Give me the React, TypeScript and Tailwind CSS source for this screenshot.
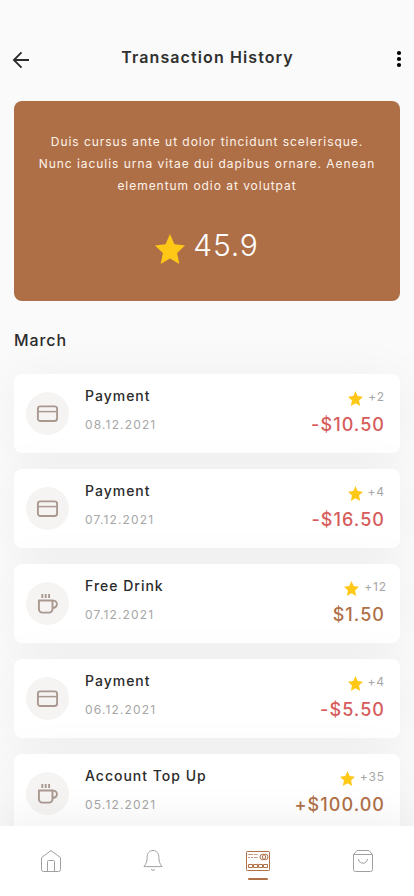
import React from 'react';

type Transaction = {
  id: number;
  title: string;
  date: string;
  points: string;
  amount: string;
  icon: 'card' | 'cup';
  amountClass: string;
  pointsClass: string;
};

const transactions: Transaction[] = [
  { id: 1, title: 'Payment', date: '08.12.2021', points: '+2', amount: '-$10.50', icon: 'card', amountClass: 'text-[#d65c5c]', pointsClass: 'mr-[15px]' },
  { id: 2, title: 'Payment', date: '07.12.2021', points: '+4', amount: '-$16.50', icon: 'card', amountClass: 'text-[#d65c5c]', pointsClass: 'mr-[15px]' },
  { id: 3, title: 'Free Drink', date: '07.12.2021', points: '+12', amount: '$1.50', icon: 'cup', amountClass: 'text-[#b07048]', pointsClass: 'mr-[13px]' },
  { id: 4, title: 'Payment', date: '06.12.2021', points: '+4', amount: '-$5.50', icon: 'card', amountClass: 'text-[#d65c5c]', pointsClass: 'mr-[15px]' },
  { id: 5, title: 'Account Top Up', date: '05.12.2021', points: '+35', amount: '+$100.00', icon: 'cup', amountClass: 'text-[#b07048]', pointsClass: 'mr-[15px]' },
];

const Star = ({ className }: { className: string }) => (
  <svg viewBox="0 0 30 30" className={className} fill="#ffc817">
    <path d="M15 0l4.4 10.2L30 11.5l-7.9 7.4L24.3 30 15 24.4 5.7 30l2.2-11.1L0 11.5l10.6-1.3z" />
  </svg>
);

const CardIcon = () => (
  <svg width="22" height="22" viewBox="0 0 22 22" fill="none" stroke="#a8988f" strokeWidth="1.9">
    <rect x="1.9" y="4.4" width="19.2" height="14.6" rx="2.4" />
    <path d="M1.9 9.6h19.2" strokeWidth="1.5" />
  </svg>
);

const CupIcon = () => (
  <svg width="22" height="22" viewBox="0 0 22 22" fill="none" stroke="#a8988f" strokeWidth="1.9">
    <path d="M2.900 8.500h13.600v8.600a3.500 3.500 0 0 1-3.500 3.500H6.400a3.500 3.500 0 0 1-3.500-3.500z" strokeLinejoin="round" />
    <path d="M16.500 8.600h.8a3.500 3.500 0 0 1 0 7.200h-.8" />
    <path d="M6.300 2v4M9.700 2v4M13.100 2v4" />
  </svg>
);

const TransactionRow = ({ item }: { item: Transaction }) => (
  <li className="flex h-[79px] rounded-lg bg-white pl-3 shadow-[0_4px_50px_rgba(0,0,0,0.05)]">
    <div className="mt-[18px] flex h-[43px] w-[43px] shrink-0 items-center justify-center rounded-full bg-[#f6f4f3] pr-px pb-px">
      {item.icon === 'card' ? <CardIcon /> : <CupIcon />}
    </div>
    <div className="ml-4 flex-1 pt-3">
      <p className="text-[14px] leading-5 font-medium tracking-[1px] text-[#2b2b2b]">{item.title}</p>
      <p className="mt-[9px] text-[12px] leading-5 tracking-[1.15px] text-[#a6a6a6]">{item.date}</p>
    </div>
    <div className="flex flex-col items-end pt-[13px]">
      <div className={`flex h-5 items-start gap-[5px] ${item.pointsClass}`}>
        <Star className="mt-1 h-[15px] w-[15px]" />
        <span className="text-[12px] leading-5 tracking-[0.9px] text-[#a6a6a6]">{item.points}</span>
      </div>
      <p className={`mt-[6px] mr-[15px] text-[18px] leading-6 font-medium tracking-[1.05px] ${item.amountClass}`}>{item.amount}</p>
    </div>
  </li>
);

const Header = () => (
  <header className="flex h-[101px] items-start justify-between pt-[45px] pr-[12px] pl-[12px]">
    <svg width="18" height="30" viewBox="0 0 18 30" fill="none" stroke="#2b2b2b" strokeWidth="1.8">
      <path d="M17 15H2M9.500 7.300L1.900 15l7.600 7.600" />
    </svg>
    <h1 className="mr-[11px] text-[16px] leading-6 font-semibold tracking-[1.1px] text-[#303030]">Transaction History</h1>
    <svg width="6" height="30" viewBox="0 0 6 30" fill="#000">
      <circle cx="3" cy="8" r="2.100" />
      <circle cx="3" cy="14" r="2.100" />
      <circle cx="3" cy="20" r="2.100" />
    </svg>
  </header>
);

const BottomNav = () => (
  <nav className="relative flex h-[70px] shrink-0 bg-white pt-[23px] shadow-[0_-8px_40px_rgba(0,0,0,0.06)]">
    <a className="ml-[40px]" aria-label="Home">
      <svg width="22" height="24" viewBox="0 0 22 24" fill="none" stroke="#a0a0a0">
        <path d="M1.500 8.600L11 1.600l9.500 7v11.900a2 2 0 0 1-2 2h-15a2 2 0 0 1-2-2z" strokeLinejoin="round" />
        <path d="M7.500 22.500v-10a1 1 0 0 1 1-1h5a1 1 0 0 1 1 1v10" />
      </svg>
    </a>
    <a className="ml-[80px]" aria-label="Notifications">
      <svg width="22" height="24" viewBox="0 0 22 24" fill="none" stroke="#a0a0a0" strokeLinecap="round">
        <path d="M2.200 17.300c2.300-3 2.900-5 2.900-8.800 0-4.500 2.400-7 5.900-7s5.900 2.500 5.900 7c0 3.800.6 5.800 2.900 8.800z" strokeLinejoin="round" />
        <path d="M9.300 20.700q1.700 1.800 3.400 0" />
      </svg>
    </a>
    <a className="ml-[82px] flex flex-col items-center" aria-label="Transactions">
      <svg width="24" height="24" viewBox="0 0 24 24" fill="none" stroke="#b07048">
        <rect x="0.500" y="2.500" width="23" height="19" rx="0.800" />
        <path d="M2 5.500h5M8 5.500h3.500M2 8.500h2M5 8.500h2M8 8.500h3.500" strokeWidth="0.700" />
        <circle cx="16.800" cy="8" r="2.800" />
        <circle cx="19.200" cy="8" r="2.800" />
        <path d="M2.500 15.500h4v3h-4zM7.500 15.500h4v3h-4zM12.500 15.500h4v3h-4zM17.500 15.500h4v3h-4z" />
      </svg>
      <span className="mt-[5px] h-[2px] w-[20px] rounded-full bg-[#b07048]" />
    </a>
    <a className="ml-[82px]" aria-label="Bag">
      <svg width="22" height="24" viewBox="0 0 22 24" fill="none" stroke="#a0a0a0">
        <path d="M1.500 5.500l3.500-4h12l3.500 4v15a2 2 0 0 1-2 2h-15a2 2 0 0 1-2-2z" strokeLinejoin="round" />
        <path d="M1.500 5.500h19M6.500 10c.5 5.600 8.500 5.600 9 0" />
      </svg>
    </a>
  </nav>
);

const App = () => {
  return (
    <div className="flex h-[896px] w-[414px] flex-col overflow-hidden bg-[#fafafa] font-['Inter',sans-serif]">
      <main className="min-h-0 flex-1 overflow-hidden">
        <Header />
        <section className="mx-[14px] h-[200px] rounded-lg bg-[#ae6f47] pt-[30px] text-center text-white">
          <p className="text-[12px] leading-[22px] tracking-[0.96px] whitespace-nowrap text-[#fff3ea]">
            Duis cursus ante ut dolor tincidunt scelerisque.
            <br />
            Nunc iaculis urna vitae dui dapibus ornare. Aenean
            <br />
            elementum odio at volutpat
          </p>
          <div className="mt-[28px] flex items-start justify-center gap-2">
            <Star className="mt-[9px] h-[30px] w-[30px]" />
            <span className="text-[30px] leading-10 font-[350] tracking-[0.8px]">45.9</span>
          </div>
        </section>
        <h2 className="mt-[27px] ml-[14px] text-[16px] leading-6 font-medium tracking-[0.9px] text-[#2b2b2b]">March</h2>
        <ul className="mx-[14px] mt-[22px] flex flex-col gap-4">
          {transactions.map((item) => (
            <TransactionRow key={item.id} item={item} />
          ))}
        </ul>
      </main>
      <BottomNav />
    </div>
  );
};

export default App;
